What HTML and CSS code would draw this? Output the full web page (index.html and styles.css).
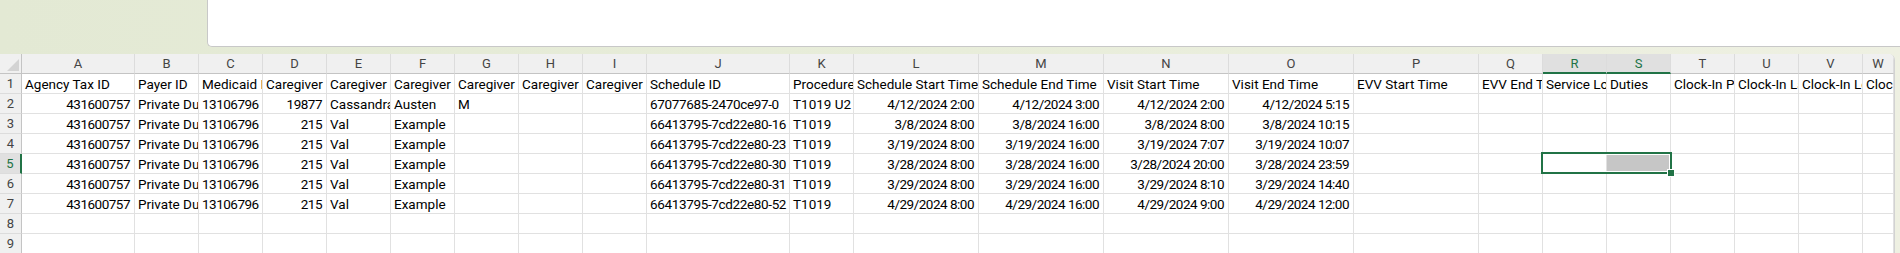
FILE: index.html
```html
<!DOCTYPE html>
<html lang="en">
<head>
    <meta charset="UTF-8">
    <title>EVV Export</title>
    <link rel="stylesheet" href="styles.css">
</head>
<body>
    <div class="topbar">
        <div class="formula-box"></div>
    </div>

    <div class="sheet">
        <div class="grid" id="grid"></div>
    </div>

    <script>
        const letters = ['A','B','C','D','E','F','G','H','I','J','K','L','M','N','O','P','Q','R','S','T','U','V','W'];
        // columns whose values are numbers/dates (right aligned)
        const numCols = [0, 3, 11, 12, 13, 14];

        const rows = [
            ['Agency Tax ID', 'Payer ID', 'Medicaid ID', 'Caregiver Code', 'Caregiver First Name', 'Caregiver Last Name', 'Caregiver', 'Caregiver', 'Caregiver SSN', 'Schedule ID', 'Procedure Code', 'Schedule Start Time', 'Schedule End Time', 'Visit Start Time', 'Visit End Time', 'EVV Start Time', 'EVV End Time', 'Service Location', 'Duties', 'Clock-In Phone', 'Clock-In Latitude', 'Clock-In Longitude', 'Clock-Out Phone'],
            ['431600757', 'Private Duty Nursing', '13106796', '19877', 'Cassandra', 'Austen', 'M', '', '', '67077685-2470ce97-0', 'T1019 U2', '4/12/2024 2:00', '4/12/2024 3:00', '4/12/2024 2:00', '4/12/2024 5:15'],
            ['431600757', 'Private Duty Nursing', '13106796', '215', 'Val', 'Example', '', '', '', '66413795-7cd22e80-16', 'T1019', '3/8/2024 8:00', '3/8/2024 16:00', '3/8/2024 8:00', '3/8/2024 10:15'],
            ['431600757', 'Private Duty Nursing', '13106796', '215', 'Val', 'Example', '', '', '', '66413795-7cd22e80-23', 'T1019', '3/19/2024 8:00', '3/19/2024 16:00', '3/19/2024 7:07', '3/19/2024 10:07'],
            ['431600757', 'Private Duty Nursing', '13106796', '215', 'Val', 'Example', '', '', '', '66413795-7cd22e80-30', 'T1019', '3/28/2024 8:00', '3/28/2024 16:00', '3/28/2024 20:00', '3/28/2024 23:59'],
            ['431600757', 'Private Duty Nursing', '13106796', '215', 'Val', 'Example', '', '', '', '66413795-7cd22e80-31', 'T1019', '3/29/2024 8:00', '3/29/2024 16:00', '3/29/2024 8:10', '3/29/2024 14:40'],
            ['431600757', 'Private Duty Nursing', '13106796', '215', 'Val', 'Example', '', '', '', '66413795-7cd22e80-52', 'T1019', '4/29/2024 8:00', '4/29/2024 16:00', '4/29/2024 9:00', '4/29/2024 12:00'],
            [],
            []
        ];

        const grid = document.getElementById('grid');

        function addCell(cls, text) {
            const div = document.createElement('div');
            div.className = cls;
            if (text) div.textContent = text;
            grid.appendChild(div);
            return div;
        }

        // column header row
        const corner = addCell('cell corner');
        corner.innerHTML = '<span class="corner-tri"></span>';
        letters.forEach(l => {
            const sel = (l === 'R' || l === 'S') ? ' selected' : '';
            addCell('cell col-head' + sel, l);
        });

        // data rows
        rows.forEach((row, r) => {
            const rowNum = r + 1;
            addCell('cell row-head' + (rowNum === 5 ? ' selected' : ''), String(rowNum));
            letters.forEach((l, c) => {
                let cls = 'cell';
                if (r > 0 && numCols.includes(c)) cls += ' num';
                if (r > 0 && c === 2) cls += ' digits';
                if (r > 0 && c === 9) cls += ' ids';
                if (rowNum === 5 && l === 'S') cls += ' filled';
                const cell = addCell(cls, row[c] || '');
                if (rowNum === 5 && l === 'R') {
                    cell.classList.add('active');
                    cell.innerHTML = '<div class="selection"><span class="handle"></span></div>';
                }
            });
        });
    </script>
</body>
</html>
```

FILE: styles.css
```css
body {
    margin: 0;
    height: 253px;
    overflow: hidden;
    font-family: 'Roboto', 'Liberation Sans', sans-serif;
    background: linear-gradient(90deg, #e3e9d4 0%, #e8edda 50%, #eef0e2 100%);
}

.topbar {
    height: 54px;
    padding-left: 207px;
    box-sizing: border-box;
}

.formula-box {
    height: 47px;
    background: white;
    border-left: 1px solid #c8c8c8;
    border-bottom: 1px solid #c8c8c8;
    border-bottom-left-radius: 5px;
    box-sizing: border-box;
}

.sheet {
    width: 1895px;
    background: white;
    border-right: 1px solid #d2d2d2;
    border-top-right-radius: 6px;
    box-sizing: border-box;
    overflow: hidden;
}

.grid {
    display: grid;
    grid-template-columns: 22px 113px repeat(8, 64px) 143px 64px repeat(5, 125px) repeat(6, 64px) 1fr;
    grid-auto-rows: 20px;
}

.cell {
    box-sizing: border-box;
    border-right: 1px solid #e1e1e1;
    border-bottom: 1px solid #e1e1e1;
    padding: 1px 3px 0 3px;
    font-size: 13.5px;
    line-height: 18px;
    color: #000;
    white-space: nowrap;
    overflow: hidden;
}

.num,
.digits {
    letter-spacing: -0.5px;
}

.ids {
    letter-spacing: -0.35px;
}

.num {
    text-align: right;
    padding-right: 4px;
}

.corner {
    background: #f0f0f0;
    border-right-color: #c4c4c4;
    border-bottom-color: #c4c4c4;
    display: flex;
    justify-content: flex-end;
    align-items: flex-end;
    padding: 0 2px 2px 0;
}

.corner-tri {
    width: 12px;
    height: 12px;
    background: #d3d3d3;
    clip-path: polygon(100% 0, 100% 100%, 0 100%);
}

.col-head {
    background: #f0f0f0;
    color: #444;
    font-size: 13px;
    text-align: center;
    border-right-color: #dcdcdc;
    border-bottom-color: #c4c4c4;
    padding-top: 1px;
}

.col-head.selected {
    background: #e0e0e0;
    color: #217346;
    border-bottom: 2px solid #217346;
}

.row-head {
    background: #f0f0f0;
    color: #444;
    font-size: 13px;
    text-align: center;
    border-right-color: #c4c4c4;
    border-bottom-color: #dcdcdc;
    padding: 1px 0 0 0;
}

.row-head.selected {
    background: #e0e0e0;
    color: #217346;
    border-right: 2px solid #217346;
}

.active {
    overflow: visible;
    position: relative;
}

.filled {
    background: #c6c6c6;
}

.selection {
    position: absolute;
    left: -2px;
    top: -2px;
    width: 131px;
    height: 22px;
    box-sizing: border-box;
    border: 2px solid #217346;
    box-shadow: inset 0 0 0 1px #fff;
    z-index: 2;
}

.handle {
    position: absolute;
    right: -4px;
    bottom: -4px;
    width: 6px;
    height: 6px;
    background: #217346;
    box-shadow: 0 0 0 1px #fff;
}
```
